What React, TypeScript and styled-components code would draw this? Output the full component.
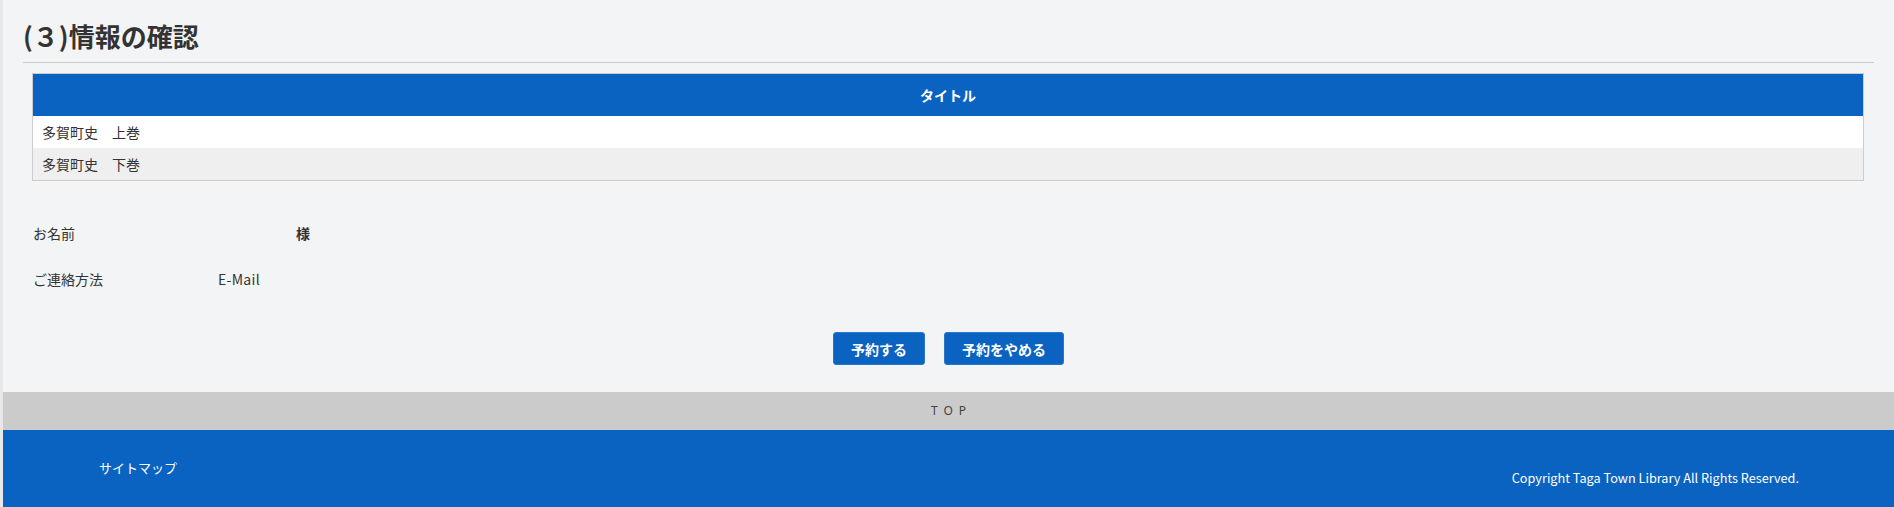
import React from 'react';
import styled, { createGlobalStyle } from 'styled-components';

const GlobalStyle = createGlobalStyle`
  html, body {
    margin: 0;
    padding: 0;
    background: #f3f4f6;
  }

  body {
    font-family: 'Noto Sans CJK JP', 'Noto Sans', sans-serif;
    color: #333;
    font-size: 14px;
  }
`;

const blue = '#0b63c1';

const Page = styled.div`
  border-left: 3px solid #e8e8e8;
  min-height: 507px;
  display: flex;
  flex-direction: column;
`;

const Main = styled.main`
  padding: 0 20px;
`;

const Heading = styled.h2`
  margin: 0;
  padding: 18px 0 8px;
  font-size: 26px;
  line-height: 36px;
  font-weight: 700;
  color: #333;
  border-bottom: 1px solid #cdcdcd;
`;

const Table = styled.table`
  margin: 10px 10px 0 9px;
  width: calc(100% - 19px);
  border-collapse: collapse;
  border: 1px solid #cdcdcd;
`;

const HeadCell = styled.th`
  height: 42px;
  padding: 0;
  background: ${blue};
  color: #fff;
  font-size: 14px;
  font-weight: 700;
  text-align: center;
`;

const Row = styled.tr<{ $alt?: boolean }>`
  background: ${(p) => (p.$alt ? '#efefef' : '#fff')};
`;

const Cell = styled.td`
  height: 32px;
  padding: 0 0 0 9px;
  font-size: 14px;
  color: #333;
`;

const Info = styled.dl`
  margin: 40px 0 0 10px;
  display: grid;
  grid-template-columns: 185px 1fr;
  row-gap: 22px;
`;

const Label = styled.dt`
  margin: 0;
  line-height: 24px;
  font-size: 14px;
`;

const Value = styled.dd`
  margin: 0;
  line-height: 24px;
  font-size: 14px;
  letter-spacing: 0.3px;
`;

const NameBlank = styled.span`
  display: inline-block;
  width: 78px;
`;

const Honorific = styled.span`
  font-weight: 700;
`;

const Actions = styled.div`
  margin: 41px 0 27px;
  display: flex;
  justify-content: center;
  gap: 19px;
`;

const Button = styled.button`
  height: 33px;
  padding: 0 17px;
  background: ${blue};
  color: #fff;
  border: 1px solid #2a77c9;
  border-radius: 3px;
  font-family: inherit;
  font-size: 14px;
  font-weight: 700;
  cursor: pointer;
`;

const TopBar = styled.a`
  display: block;
  height: 38px;
  line-height: 38px;
  background: #cbcbcb;
  color: #444;
  text-align: center;
  text-decoration: none;
  font-family: 'Noto Sans', sans-serif;
  font-size: 12px;
  letter-spacing: 6px;
  text-indent: 6px;
`;

const Footer = styled.footer`
  flex: 1;
  background: ${blue};
  color: #fff;
  display: flex;
  justify-content: space-between;
  align-items: flex-start;
  padding: 0 95px 0 96px;
`;

const SiteMap = styled.a`
  margin-top: 29px;
  line-height: 18px;
  color: #fff;
  text-decoration: none;
  font-size: 13px;
`;

const Copyright = styled.small`
  margin-top: 39px;
  line-height: 18px;
  font-size: 12.7px;
`;

const books = ['多賀町史　上巻', '多賀町史　下巻'];

export default function App() {
  return (
    <>
      <GlobalStyle />
      <Page>
        <Main>
          <Heading>(３)情報の確認</Heading>
          <Table>
            <thead>
              <tr>
                <HeadCell>タイトル</HeadCell>
              </tr>
            </thead>
            <tbody>
              {books.map((b, i) => (
                <Row key={b} $alt={i % 2 === 1}>
                  <Cell>{b}</Cell>
                </Row>
              ))}
            </tbody>
          </Table>
          <Info>
            <Label>お名前</Label>
            <Value>
              <NameBlank />
              <Honorific>様</Honorific>
            </Value>
            <Label>ご連絡方法</Label>
            <Value>E-Mail</Value>
          </Info>
          <Actions>
            <Button type="button">予約する</Button>
            <Button type="button">予約をやめる</Button>
          </Actions>
        </Main>
        <TopBar href="#">TOP</TopBar>
        <Footer>
          <SiteMap href="#">サイトマップ</SiteMap>
          <Copyright>Copyright Taga Town Library All Rights Reserved.</Copyright>
        </Footer>
      </Page>
    </>
  );
}
